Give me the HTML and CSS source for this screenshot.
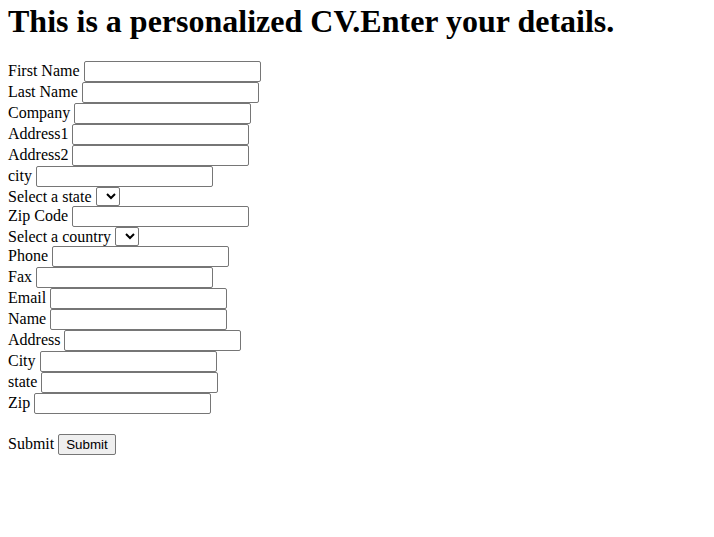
FILE: index.html
```html
<!DOCTYPE html>
<html>
<head>
<meta charset="utf-8">
<title>CV</title>
<link rel="stylesheet" href="styles.css">
</head>
<body>
<h1 class="title">This is a personalized CV.Enter your details.</h1>
<form class="cv-form">
  <div class="row">First Name <input class="field" type="text"></div>
  <div class="row">Last Name <input class="field" type="text"></div>
  <div class="row">Company <input class="field" type="text"></div>
  <div class="row">Address1 <input class="field" type="text"></div>
  <div class="row">Address2 <input class="field" type="text"></div>
  <div class="row">city <input class="field" type="text"></div>
  <div class="row row-select">Select a state <select class="picker"></select></div>
  <div class="row">Zip Code <input class="field" type="text"></div>
  <div class="row row-select">Select a country <select class="picker"></select></div>
  <div class="row">Phone <input class="field" type="text"></div>
  <div class="row">Fax <input class="field" type="text"></div>
  <div class="row">Email <input class="field" type="text"></div>
  <div class="row">Name <input class="field" type="text"></div>
  <div class="row">Address <input class="field" type="text"></div>
  <div class="row">City <input class="field" type="text"></div>
  <div class="row">state <input class="field" type="text"></div>
  <div class="row">Zip <input class="field" type="text"></div>
  <div class="row row-submit">Submit <button class="btn" type="submit">Submit</button></div>
</form>
</body>
</html>
```
FILE: styles.css
```css
body {
  margin: 0 8px;
  font-family: "Liberation Serif", "Times New Roman", serif;
  font-size: 16px;
  color: #000;
  background: #fff;
}
.title {
  font-size: 32px;
  font-weight: bold;
  margin: 3px 0 21px;
  line-height: 37px;
}
.cv-form {
  margin: 0;
}
.row {
  height: 21px;
  line-height: 20px;
  white-space: nowrap;
}
.row-select {
  height: 19px;
  line-height: 19px;
}
.row-submit {
  margin-top: 20px;
}
.field {
  box-sizing: border-box;
  width: 177px;
  height: 21px;
  margin: 0;
  padding: 1px 2px;
  border: 1px solid #767676;
  border-radius: 2px;
  background: #fff;
  font: 13.33px Arial, "Liberation Sans", sans-serif;
  vertical-align: top;
}
.picker {
  box-sizing: border-box;
  width: 24px;
  height: 19px;
  margin: 0;
  border: 1px solid #767676;
  border-radius: 2px;
  background: #fff;
  font: 13.33px Arial, "Liberation Sans", sans-serif;
  vertical-align: bottom;
}
.btn {
  box-sizing: border-box;
  height: 21px;
  padding: 1px 7px;
  margin: 0;
  border: 1px solid #767676;
  border-radius: 2px;
  background: #efefef;
  color: #000;
  font: 13.33px Arial, "Liberation Sans", sans-serif;
  vertical-align: top;
}
```
